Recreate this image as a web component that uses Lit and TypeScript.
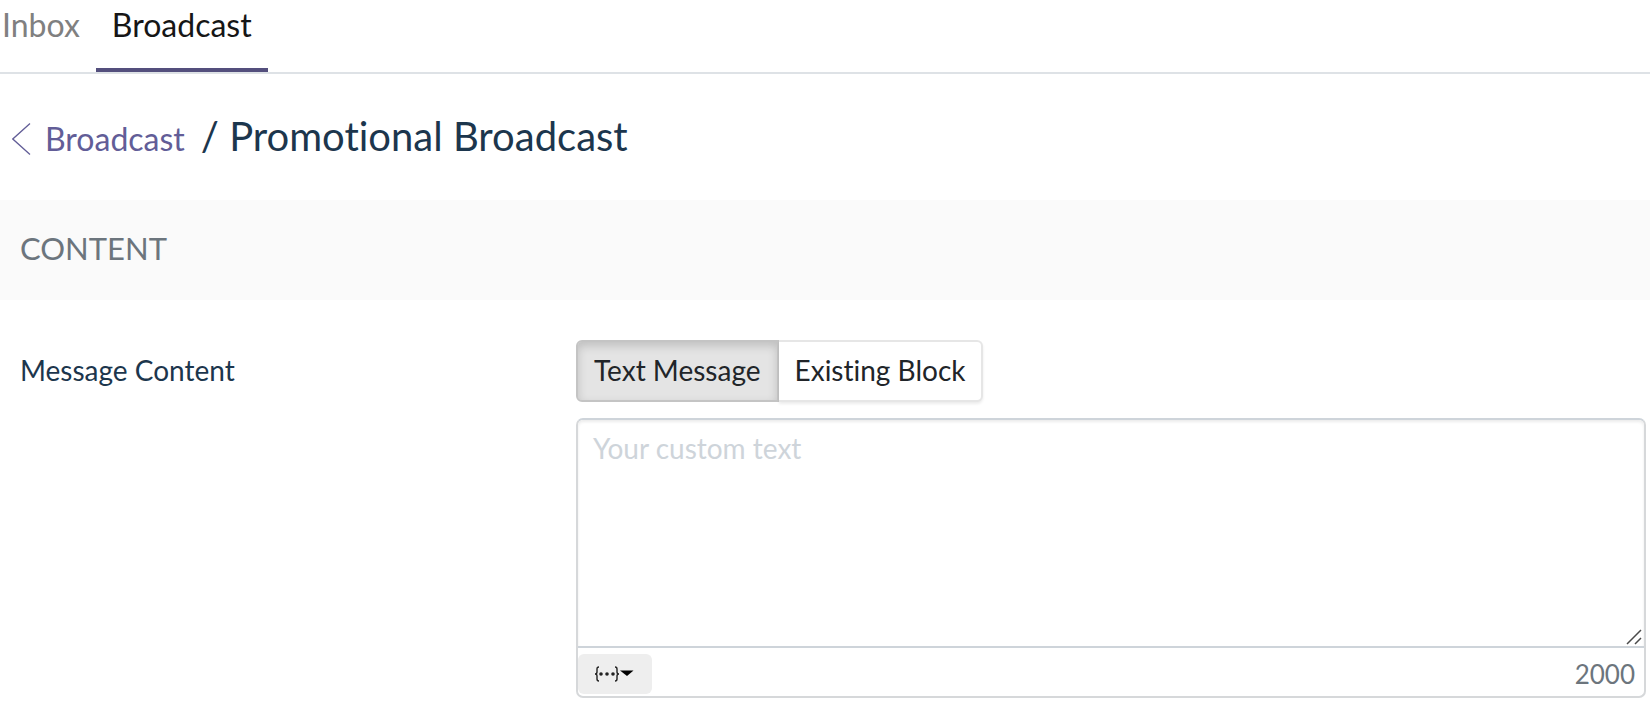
import { LitElement, html, css } from "lit";
import { customElement, state } from "lit/decorators.js";

@customElement("app-root")
export class AppRoot extends LitElement {
  @state() private mode: "text" | "block" = "text";
  @state() private message = "";

  private readonly limit = 2000;

  static styles = css`
    :host {
      display: block;
      background: #fff;
      color: #1c364d;
      font-family: Lato, "Liberation Sans", sans-serif;
      font-size: 28px;
      line-height: 40px;
      font-variant-ligatures: none;
    }
    * {
      box-sizing: border-box;
    }
    a {
      color: inherit;
      text-decoration: none;
    }
    .tabs {
      display: flex;
      height: 74px;
      border-bottom: 2px solid #dee2e6;
      font-size: 32px;
    }
    .tab {
      padding: 5px 16px 0;
      color: #808080;
    }
    .tab:first-child {
      padding-left: 2px;
    }
    .tab.active {
      color: #161616;
      border-bottom: 4px solid #544f7d;
    }
    .crumbs {
      display: flex;
      align-items: baseline;
      height: 126px;
      padding: 38px 12px 0;
      font-size: 32px;
    }
    .back {
      display: flex;
      align-items: center;
      gap: 14px;
      color: #625d97;
    }
    .back span {
      align-self: baseline;
    }
    .title {
      margin: 0 0 0 16px;
      font-size: 40px;
      font-weight: 400;
      line-height: 48px;
    }
    .section {
      margin: 0;
      padding: 28px 20px 32px;
      background: #fafafa;
      color: #6c757d;
      font-size: 31px;
      font-weight: 400;
    }
    .form {
      display: grid;
      grid-template-columns: 556fr 1070fr;
      padding: 40px 4px 6px 20px;
    }
    .label {
      padding-top: 10px;
    }
    .field {
      display: flex;
      flex-direction: column;
      align-items: flex-start;
      gap: 16px;
    }
    .segments {
      display: flex;
    }
    .segment {
      padding: 8px 16px 10px;
      border: 2px solid #e6e6e6;
      background: #fff;
      color: #212529;
      font: inherit;
      font-variant-ligatures: none;
      box-shadow: 0 2px 3px rgba(0, 0, 0, 0.08);
    }
    .segment:first-child {
      border-radius: 6px 0 0 6px;
      border-right: 0;
    }
    .segment:last-child {
      border-radius: 0 6px 6px 0;
      border-left: 0;
    }
    .segment.on {
      border: 2px solid #c4c4c4;
      background: #e4e4e4;
      box-shadow: inset 0 4px 10px rgba(0, 0, 0, 0.16);
    }
    .editor {
      width: 100%;
      border: 2px solid #d6d8da;
      border-top-color: #ced4da;
      border-radius: 7px;
    }
    .area {
      position: relative;
      border-bottom: 2px solid #ced4da;
    }
    textarea {
      display: block;
      width: 100%;
      height: 226px;
      padding: 8px 15px;
      border: 0;
      border-radius: 5px 5px 0 0;
      outline: 0;
      resize: none;
      background: #fff;
      color: #212529;
      font: inherit;
      box-shadow: inset 0 2px 3px rgba(0, 0, 0, 0.08);
    }
    textarea::placeholder {
      color: #ced4da;
      opacity: 1;
    }
    .grip {
      position: absolute;
      right: 2px;
      bottom: 1px;
    }
    .footer {
      display: flex;
      justify-content: space-between;
      align-items: center;
      height: 48px;
      padding: 4px 9px 0 0;
      color: #6c757d;
      font-size: 26px;
    }
    .insert {
      display: flex;
      padding: 10px 16px;
      border: 0;
      border-radius: 6px;
      background: #eee;
    }
    svg {
      display: block;
    }
  `;

  render() {
    return html`
      <nav class="tabs">
        <a class="tab" href="#inbox">Inbox</a>
        <a class="tab active" href="#broadcast" aria-current="page">Broadcast</a>
      </nav>
      <header class="crumbs">
        <a class="back" href="#broadcast">
          <svg width="19" height="32" viewBox="0 0 19 32" fill="none" stroke="currentColor" stroke-width="1.3" aria-hidden="true">
            <path d="M18 .5 .8 16 18 31.5" />
          </svg>
          <span>Broadcast</span>
        </a>
        <h1 class="title">/ Promotional Broadcast</h1>
      </header>
      <h2 class="section">CONTENT</h2>
      <form class="form">
        <label class="label" for="message">Message Content</label>
        <div class="field">
          <div class="segments">
            <button type="button" class="segment ${this.mode === "text" ? "on" : ""}" @click=${() => (this.mode = "text")}>Text Message</button>
            <button type="button" class="segment ${this.mode === "block" ? "on" : ""}" @click=${() => (this.mode = "block")}>Existing Block</button>
          </div>
          <div class="editor">
            <div class="area">
              <textarea
                id="message"
                placeholder="Your custom text"
                maxlength=${this.limit}
                .value=${this.message}
                @input=${(e: Event) => (this.message = (e.target as HTMLTextAreaElement).value)}
              ></textarea>
              <svg class="grip" width="16" height="16" viewBox="0 0 16 16" stroke="#4a4a4a" stroke-width="1.5" aria-hidden="true">
                <path d="M1 15 15 1M9 15l6-6" />
              </svg>
            </div>
            <div class="footer">
              <button type="button" class="insert" aria-label="Insert variable">
                <svg width="42" height="20" viewBox="0 0 42 20" aria-hidden="true">
                  <g fill="none" stroke="#222" stroke-width="1.4">
                    <path d="M5 3Q3 3 3 5V8Q3 10 1 10Q3 10 3 12V15Q3 17 5 17" />
                    <path d="M21 3Q23 3 23 5V8Q23 10 25 10Q23 10 23 12V15Q23 17 21 17" />
                  </g>
                  <g fill="#222">
                    <circle cx="7" cy="10" r="1.8" />
                    <circle cx="13" cy="10" r="1.8" />
                    <circle cx="19" cy="10" r="1.8" />
                  </g>
                  <path d="M26 6.500H39.500L33 12Z" fill="#000" />
                </svg>
              </button>
              <output for="message">${this.limit - this.message.length}</output>
            </div>
          </div>
        </div>
      </form>
    `;
  }
}
